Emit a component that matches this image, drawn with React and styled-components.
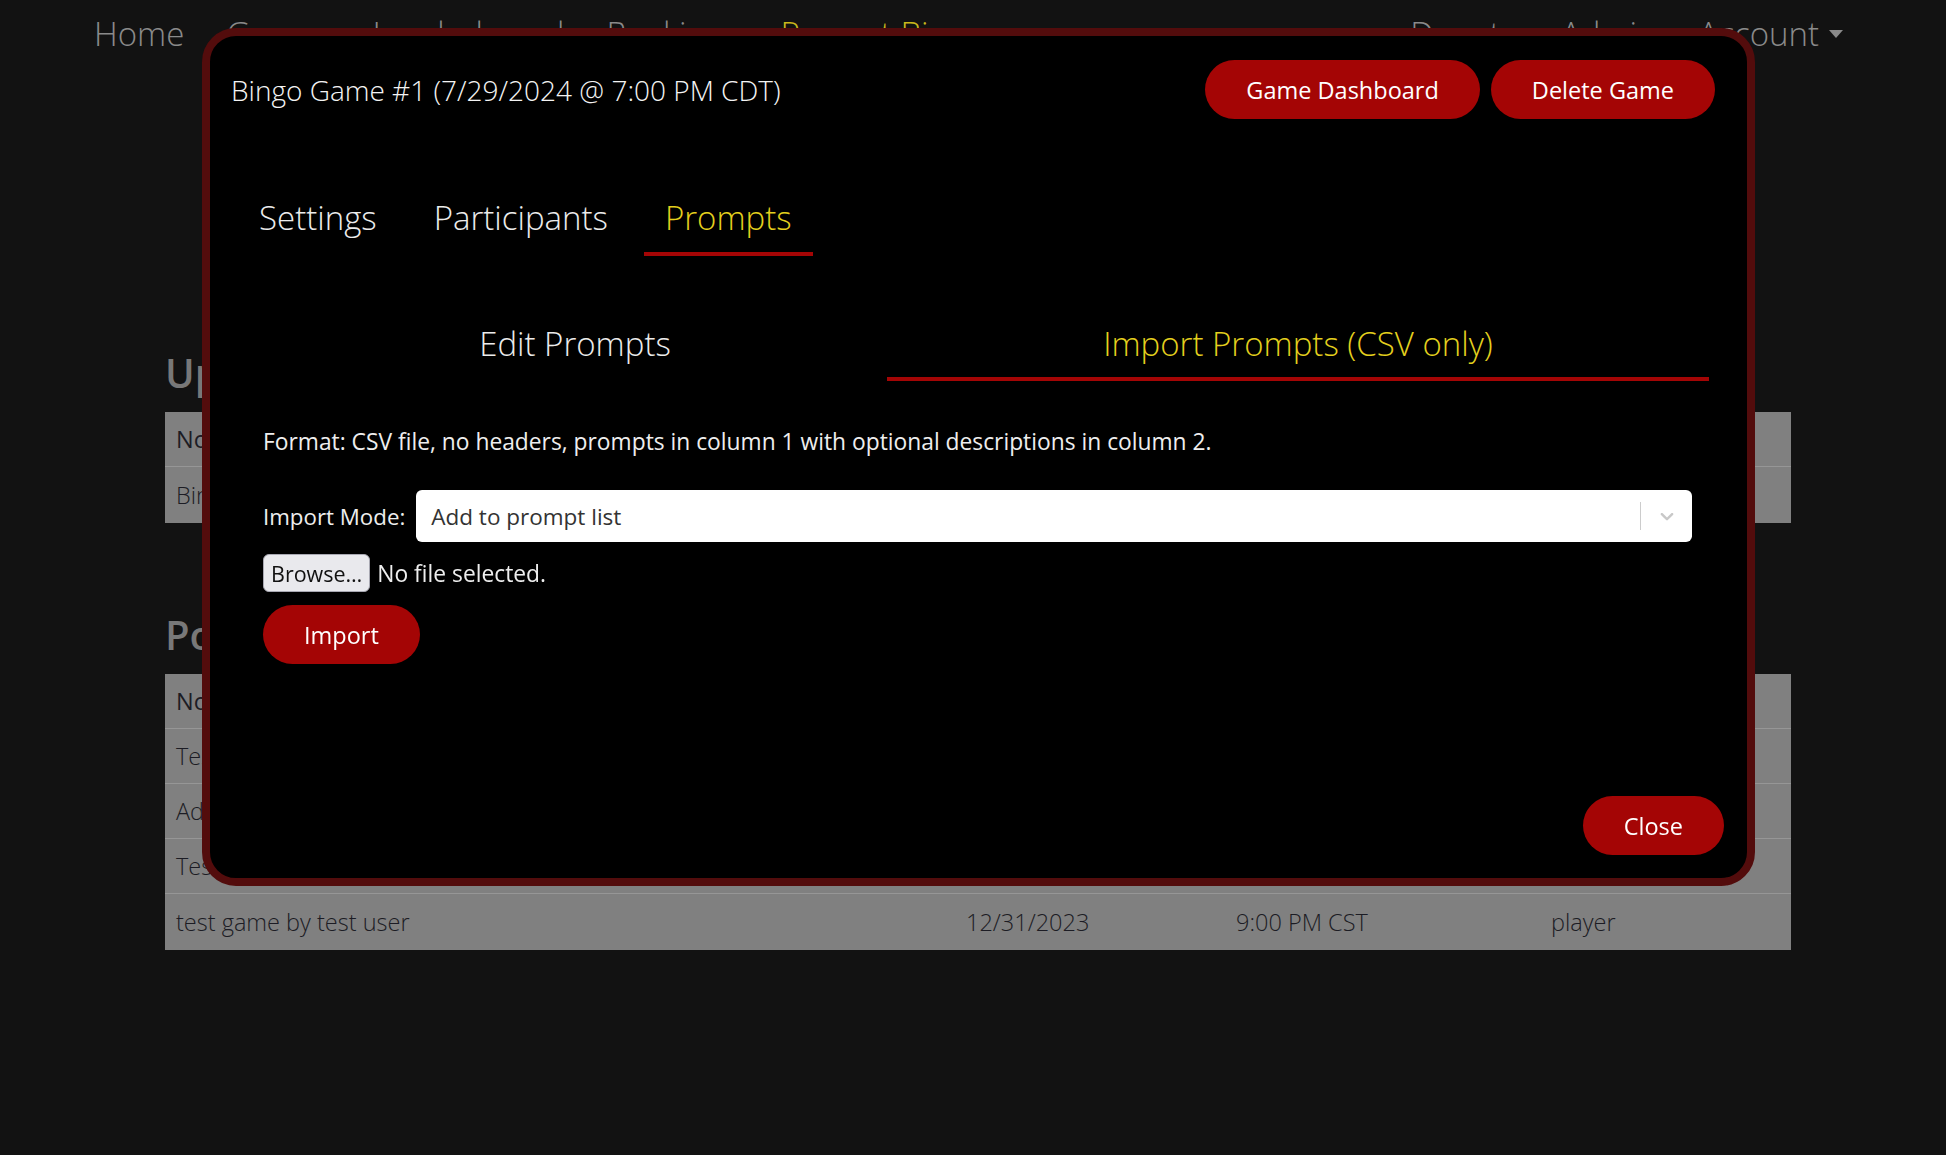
import * as React from 'react'
import styled, { createGlobalStyle } from 'styled-components'

const RED = '#a40505'
const YELLOW = '#e4d01e'

const GlobalStyle = createGlobalStyle`
  body {
    margin: 0;
    background: #121212;
    font-family: "Open Sans", "Liberation Sans", sans-serif;
  }
  *, *::before, *::after {
    box-sizing: border-box;
  }
`

const Page = styled.div`
  min-height: 100vh;
  background: #121212;
`

const NavBar = styled.nav`
  height: 68px;
  display: flex;
  align-items: center;
  gap: 42px;
  padding: 0 103px 0 94px;
`

const NavLink = styled.a`
  font-size: 33px;
  font-weight: 300;
  line-height: 1.2;
  color: ${(p) => (p.$active ? '#c9b81c' : '#8a8a8a')};
  text-decoration: none;
  white-space: nowrap;
  display: flex;
  align-items: center;
  ${(p) => p.$push && 'margin-left: auto;'}
`

const Caret = styled.span`
  display: inline-block;
  margin-left: 10px;
  border-top: 8px solid #8a8a8a;
  border-left: 7.5px solid transparent;
  border-right: 7.5px solid transparent;
`

const Main = styled.main`
  width: 1626px;
  margin-left: 165px;
`

const SectionTitle = styled.h2`
  margin: ${(p) => p.$top}px 0 ${(p) => p.$bottom}px;
  font-size: 40px;
  line-height: 48px;
  font-weight: 600;
  color: #787878;
  white-space: nowrap;
`

const Table = styled.div`
  background: #808080;
`

const Row = styled.div`
  display: grid;
  grid-template-columns: 790px 270px 315px 1fr;
  align-items: center;
  height: 55px;
  border-bottom: 1px solid #969696;
  &:last-child {
    border-bottom: 0;
    height: 56px;
  }
`

const Cell = styled.div`
  padding: 0 11px;
  font-size: 23.5px;
  font-weight: ${(p) => (p.$head ? 400 : 300)};
  color: #1c1c24;
  white-space: nowrap;
`

const Modal = styled.div`
  position: fixed;
  left: 202px;
  top: 28px;
  width: 1553px;
  height: 858px;
  border: 8px solid #530c0c;
  border-radius: 34px;
  background: #000;
  display: flex;
  flex-direction: column;
  z-index: 10;
`

const ModalHeader = styled.div`
  display: flex;
  align-items: center;
  justify-content: space-between;
  padding: 24px 32px 0 21px;
`

const ModalTitle = styled.h5`
  margin: 0;
  font-size: 28px;
  font-weight: 300;
  color: #f4f4f4;
`

const ButtonGroup = styled.div`
  display: flex;
  gap: 11px;
`

const PillButton = styled.button`
  height: 59px;
  padding: 0 41px;
  border: 0;
  border-radius: 30px;
  background: ${RED};
  color: #fff;
  font-family: inherit;
  font-size: 23.5px;
  font-weight: 400;
  white-space: nowrap;
  align-self: ${(p) => p.$align || 'auto'};
  margin-top: ${(p) => p.$mt || 0}px;
`

const Tabs = styled.div`
  display: flex;
  gap: 15px;
  margin: 65px 0 0 28px;
`

const Tab = styled.a`
  padding: 12px 21px;
  font-size: 33px;
  font-weight: 300;
  line-height: 44px;
  color: ${(p) => (p.$active ? YELLOW : '#ececec')};
  border-bottom: 4px solid ${(p) => (p.$active ? RED : 'transparent')};
`

const SubTabs = styled.div`
  display: flex;
  margin: 55px 38px 0 53px;
`

const SubTab = styled.a`
  flex: 1 1 auto;
  text-align: center;
  padding: 11px 16px;
  font-size: 33px;
  font-weight: 300;
  line-height: 44px;
  color: ${(p) => (p.$active ? YELLOW : '#ececec')};
  border-bottom: 4px solid ${(p) => (p.$active ? RED : 'transparent')};
`

const ImportForm = styled.div`
  display: flex;
  flex-direction: column;
  margin: 44px 55px 0 53px;
`

const HelpText = styled.p`
  margin: 0;
  font-size: 22.8px;
  line-height: 33px;
  font-weight: 400;
  color: #eeeeee;
`

const FieldRow = styled.div`
  display: flex;
  align-items: center;
  gap: ${(p) => p.$gap}px;
  margin-top: ${(p) => p.$mt}px;
`

const Label = styled.label`
  font-size: 22.3px;
  font-weight: 400;
  color: #eeeeee;
  white-space: nowrap;
`

const Select = styled.div`
  flex: 1;
  height: 52px;
  display: flex;
  align-items: center;
  background: #fff;
  border-radius: 6px;
  padding-left: 15px;
`

const SelectValue = styled.span`
  flex: 1;
  font-size: 22.5px;
  font-weight: 400;
  color: #333;
`

const Separator = styled.span`
  width: 1px;
  height: 28px;
  background: #ccc;
`

const Indicator = styled.span`
  display: flex;
  padding: 0 14px 0 15px;
  color: #c8c8c8;
`

const BrowseButton = styled.button`
  height: 38px;
  padding: 0 7px;
  border: 1px solid #a8a8b2;
  border-radius: 6px;
  background: #e9e9ed;
  color: #111;
  font-family: inherit;
  font-size: 21.5px;
`

const FileText = styled.span`
  font-size: 22.8px;
  color: #eeeeee;
`

const ModalFooter = styled.div`
  margin-top: auto;
  display: flex;
  justify-content: flex-end;
  padding: 0 23px 23px;
`

const upcoming = [
  ['Nominated Game', 'Date', 'Time', 'Role'],
  ['Bingo Game #1', '7/29/2024', '7:00 PM CDT', 'host'],
]

const past = [
  ['Nominated Game', 'Date', 'Time', 'Role'],
  ['Test Game', '1/15/2024', '8:00 PM CST', 'host'],
  ['Admin test game', '1/2/2024', '7:30 PM CST', 'host'],
  ['Test game 2', '1/1/2024', '6:00 PM CST', 'player'],
  ['test game by test user', '12/31/2023', '9:00 PM CST', 'player'],
]

function GameTable({ rows }) {
  return (
    <Table>
      {rows.map((r, i) => (
        <Row key={i}>
          {r.map((c, j) => (
            <Cell key={j} $head={i === 0}>{c}</Cell>
          ))}
        </Row>
      ))}
    </Table>
  )
}

function Chevron() {
  return (
    <svg width="22" height="22" viewBox="0 0 20 20" fill="currentColor">
      <path d="M4.516 7.548c0.436-0.446 1.043-0.481 1.576 0l3.908 3.747 3.908-3.747c0.533-0.481 1.141-0.446 1.574 0 0.436 0.445 0.408 1.197 0 1.615-0.406 0.418-4.695 4.502-4.695 4.502-0.217 0.223-0.502 0.335-0.787 0.335s-0.57-0.112-0.789-0.335c0 0-4.287-4.084-4.695-4.502s-0.436-1.17 0-1.615z" />
    </svg>
  )
}

export default function App() {
  return (
    <Page>
      <GlobalStyle />
      <NavBar>
        <NavLink>Home</NavLink>
        <NavLink>Games</NavLink>
        <NavLink>Leaderboard</NavLink>
        <NavLink>Rankings</NavLink>
        <NavLink $active>Prompt Bingo</NavLink>
        <NavLink $push>Donate</NavLink>
        <NavLink>Admin</NavLink>
        <NavLink>
          Account<Caret />
        </NavLink>
      </NavBar>

      <Main>
        <SectionTitle $top={281} $bottom={15}>Upcoming Games</SectionTitle>
        <GameTable rows={upcoming} />
        <SectionTitle $top={88} $bottom={15}>Postgame Recaps</SectionTitle>
        <GameTable rows={past} />
      </Main>

      <Modal>
        <ModalHeader>
          <ModalTitle>Bingo Game #1 (7/29/2024 @ 7:00 PM CDT)</ModalTitle>
          <ButtonGroup>
            <PillButton>Game Dashboard</PillButton>
            <PillButton>Delete Game</PillButton>
          </ButtonGroup>
        </ModalHeader>

        <Tabs>
          <Tab>Settings</Tab>
          <Tab>Participants</Tab>
          <Tab $active>Prompts</Tab>
        </Tabs>

        <SubTabs>
          <SubTab>Edit Prompts</SubTab>
          <SubTab $active>Import Prompts (CSV only)</SubTab>
        </SubTabs>

        <ImportForm>
          <HelpText>
            Format: CSV file, no headers, prompts in column 1 with optional descriptions in column 2.
          </HelpText>
          <FieldRow $gap={11} $mt={32}>
            <Label>Import Mode:</Label>
            <Select>
              <SelectValue>Add to prompt list</SelectValue>
              <Separator />
              <Indicator>
                <Chevron />
              </Indicator>
            </Select>
          </FieldRow>
          <FieldRow $gap={7} $mt={12}>
            <BrowseButton>Browse…</BrowseButton>
            <FileText>No file selected.</FileText>
          </FieldRow>
          <PillButton $align="flex-start" $mt={13}>Import</PillButton>
        </ImportForm>

        <ModalFooter>
          <PillButton>Close</PillButton>
        </ModalFooter>
      </Modal>
    </Page>
  )
}
